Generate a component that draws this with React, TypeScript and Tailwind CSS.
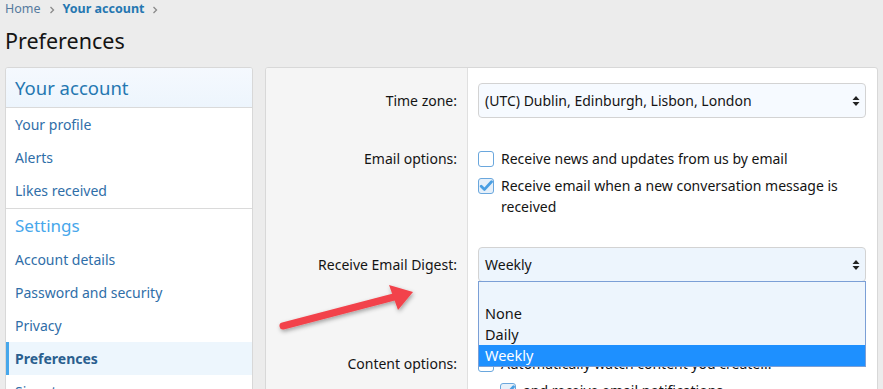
import React from "react";

const font = { fontFamily: '"Noto Sans", "Open Sans", sans-serif' };

function Chevron() {
  return (
    <svg width="8" height="10" viewBox="0 0 8 10" className="mx-[7px]">
      <path d="M2.5 2 L5.5 5 L2.5 8" fill="none" stroke="#8a8a8a" strokeWidth="1.3" />
    </svg>
  );
}

function SelectArrows() {
  return (
    <svg width="8" height="12" viewBox="0 0 8 12">
      <path d="M4 1 L7.5 5 L0.5 5 Z" fill="#222" />
      <path d="M4 11 L7.5 7 L0.5 7 Z" fill="#222" />
    </svg>
  );
}

function Checkbox({ checked }: { checked?: boolean }) {
  return (
    <span
      className={
        "mt-[3px] flex h-[16px] w-[16px] shrink-0 items-center justify-center rounded-[3px] border border-[#6aa7dd] " +
        (checked ? "bg-[#e6f0fa]" : "bg-white")
      }
    >
      {checked && (
        <svg width="14" height="14" viewBox="0 0 14 14">
          <path d="M2.2 7.2 L5.5 10.4 L12.5 2.8" fill="none" stroke="#4a9fe3" strokeWidth="2.8" strokeLinecap="round" strokeLinejoin="round" />
        </svg>
      )}
    </span>
  );
}

const sideItem = "flex h-[33px] items-center px-[9px] text-[14px] text-[#2f6ea8]";

export default function App() {
  return (
    <div className="relative h-[389px] w-[883px] overflow-hidden bg-[#ececec] text-[#141414]" style={font}>
      {/* breadcrumb */}
      <div className="flex h-[19px] items-center px-[5px] text-[12.5px]">
        <span className="text-[#557a9e]">Home</span>
        <Chevron />
        <span className="font-bold text-[#2577b1]">Your account</span>
        <Chevron />
      </div>
      <h1 className="mt-[7px] px-[5px] text-[21.5px] leading-[30px] text-[#141414]">Preferences</h1>

      <div className="mt-[11px] flex items-start gap-[12px] px-[5px]">
        {/* sidebar */}
        <div className="w-[248px] shrink-0 overflow-hidden rounded-t-[3px] border border-[#d8d8d8] bg-white">
          <div className="flex h-[40px] items-center border-b border-[#dadada] bg-gradient-to-b from-[#f5f9fe] to-[#edf5fd] px-[9px] pt-[1px] text-[18.5px] text-[#2577b1]">
            Your account
          </div>
          <div className="pb-[1px]">
            <div className={sideItem}>Your profile</div>
            <div className={sideItem}>Alerts</div>
            <div className={sideItem}>Likes received</div>
          </div>
          <div className="border-t border-[#dadada]">
            <div className="flex h-[34px] items-center px-[9px] text-[17px] text-[#47a7eb]">Settings</div>
            <div className={sideItem}>Account details</div>
            <div className={sideItem}>Password and security</div>
            <div className={sideItem}>Privacy</div>
            <div className="flex h-[33px] items-center border-l-[3px] border-[#47a7eb] bg-[#edf6fd] px-[6px] text-[14px] font-bold text-[#2a5f8f]">
              Preferences
            </div>
            <div className={sideItem}>Signature</div>
          </div>
        </div>

        {/* main */}
        <div className="h-[400px] w-[613px] shrink-0 overflow-hidden rounded-[3px] border border-[#d8d8d8] bg-white">
          <div className="grid grid-cols-[202px_1fr] text-[14px] leading-[21px]">
            {/* Time zone */}
            <div className="flex items-center justify-end border-r border-[#e0e0e0] bg-[#f5f5f5] px-[10px] py-[15px]">Time zone:</div>
            <div className="py-[15px] pl-[10px] pr-[11px]">
              <div className="flex h-[35px] items-center justify-between rounded-[4px] border border-[#d3d3d3] bg-[#f6faff] pl-[6px] pr-[5px]">
                <span>(UTC) Dublin, Edinburgh, Lisbon, London</span>
                <SelectArrows />
              </div>
            </div>

            {/* Email options */}
            <div className="flex justify-end border-r border-[#e0e0e0] bg-[#f5f5f5] px-[10px] py-[15px]">Email options:</div>
            <div className="flex flex-col gap-[6px] py-[15px] pl-[10px] pr-[30px]">
              <label className="flex gap-[7px]">
                <Checkbox />
                <span>Receive news and updates from us by email</span>
              </label>
              <label className="flex gap-[7px]">
                <Checkbox checked />
                <span>Receive email when a new conversation message is received</span>
              </label>
            </div>

            {/* Digest */}
            <div className="flex items-start justify-end border-r border-[#e0e0e0] bg-[#f5f5f5] px-[10px] pt-[22px] pb-[15px]">Receive Email Digest:</div>
            <div className="relative pt-[15px] pb-[15px] pl-[10px] pr-[11px]">
              <div className="flex h-[35px] items-center justify-between rounded-[4px] border border-[#d3d3d3] bg-[#edf5fd] pl-[6px] pr-[5px]">
                <span>Weekly</span>
                <SelectArrows />
              </div>
              <div className="h-[41px]" />
              {/* open list */}
              <div className="absolute left-[10px] right-[11px] top-[49px] z-10 border border-[#7b9fd6] bg-[#edf5fd] pt-[21px] text-[14.5px]">
                <div className="h-[21px] px-[6px]">None</div>
                <div className="h-[21px] px-[6px]">Daily</div>
                <div className="h-[21px] bg-[#1e90ff] px-[6px] text-white">Weekly</div>
              </div>
            </div>

            {/* Content options */}
            <div className="flex justify-end border-r border-[#e0e0e0] bg-[#f5f5f5] px-[10px] py-[15px]">Content options:</div>
            <div className="flex flex-col gap-[6px] py-[15px] pl-[10px] pr-[30px]">
              <label className="flex gap-[7px]">
                <Checkbox />
                <span>Automatically watch content you create...</span>
              </label>
              <label className="ml-[22px] flex gap-[7px]">
                <Checkbox checked />
                <span>and receive email notifications</span>
              </label>
            </div>
          </div>
        </div>
      </div>

      {/* annotation arrow */}
      <svg className="pointer-events-none absolute left-[270px] top-[280px]" width="160" height="60" viewBox="0 0 160 60">
        <defs>
          <filter id="sh" x="-20%" y="-40%" width="140%" height="180%">
            <feDropShadow dx="1" dy="2" stdDeviation="2" floodColor="#000" floodOpacity="0.35" />
          </filter>
        </defs>
        <g filter="url(#sh)">
          <line x1="13" y1="46" x2="124" y2="17" stroke="#f2434b" strokeWidth="7" strokeLinecap="round" />
          <path d="M143 12 L119 5 L128 30 Z" fill="#f2434b" />
        </g>
      </svg>
    </div>
  );
}
